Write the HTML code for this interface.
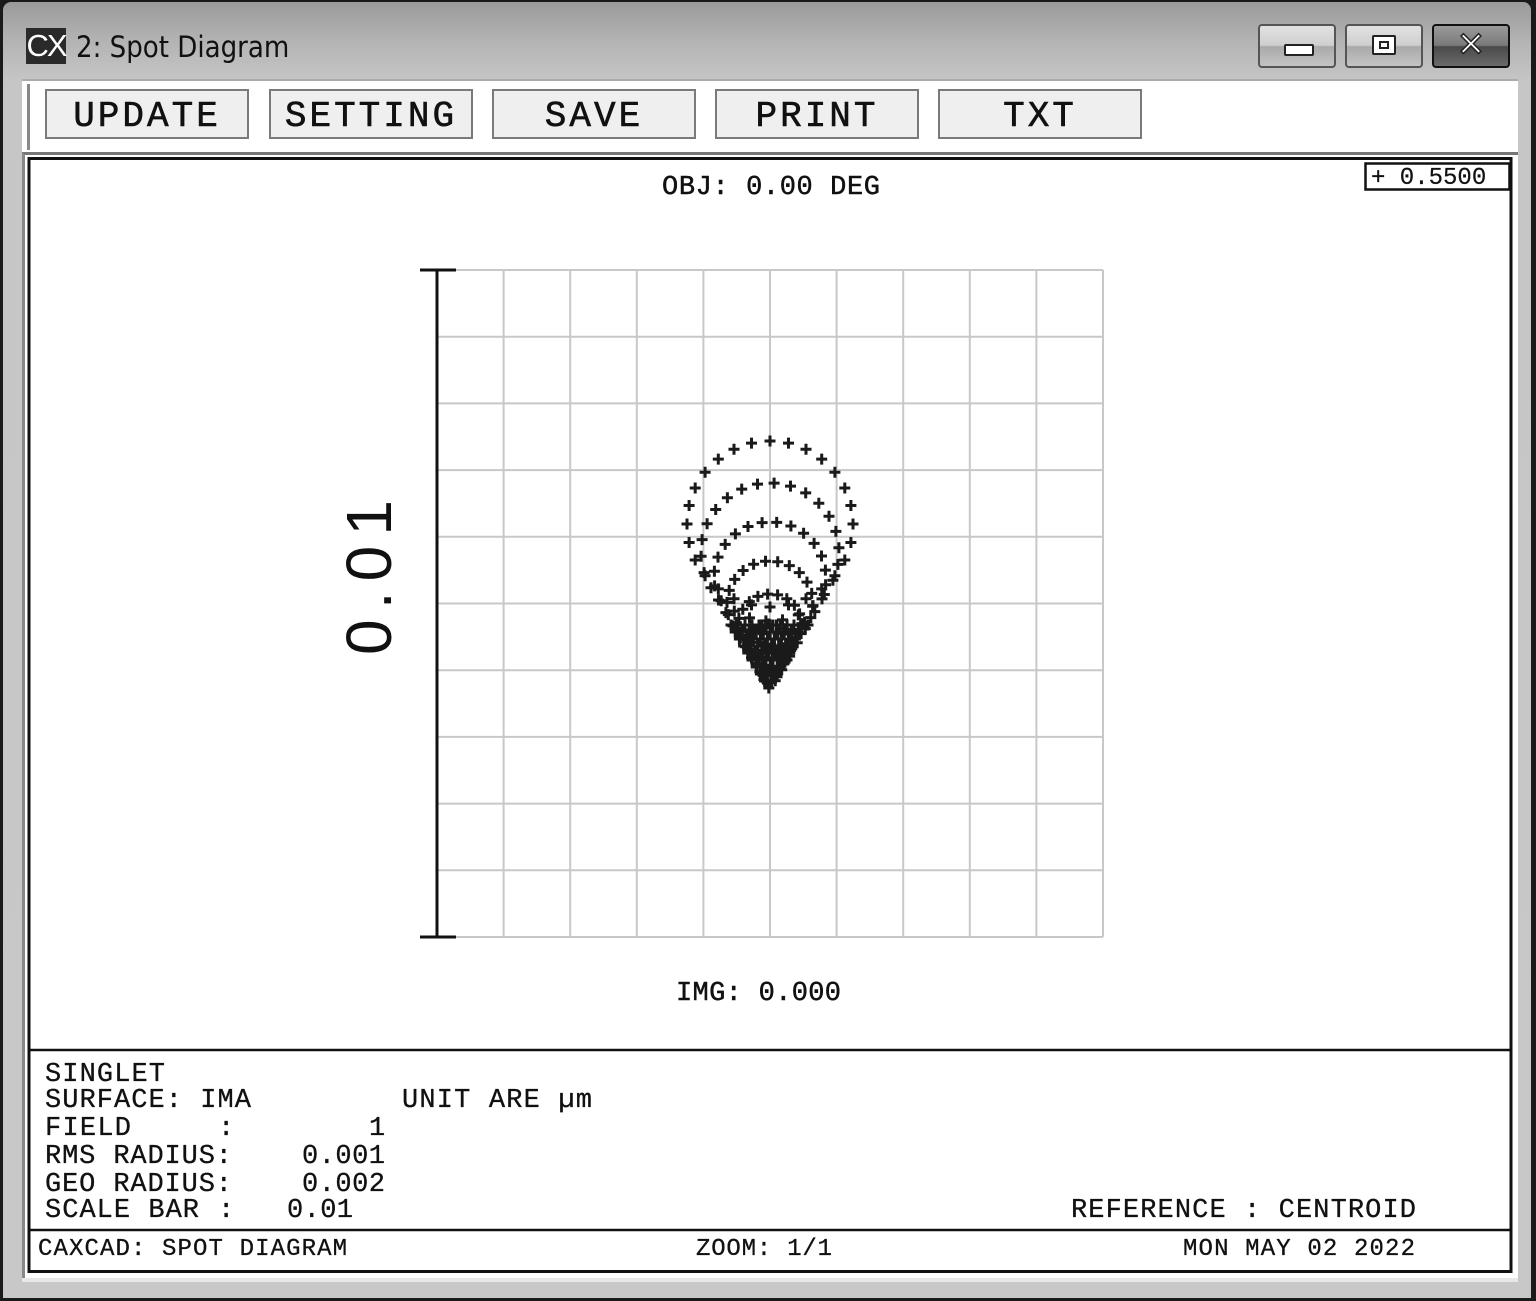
<!DOCTYPE html>
<html><head><meta charset="utf-8"><style>
html,body{margin:0;padding:0;width:1536px;height:1301px;overflow:hidden;background:#fff}
.a{position:absolute}
.btn{position:absolute;top:89px;height:50px;width:204px;background:#efefef;border:2px solid #7a7a7a;box-sizing:border-box;font-family:"Liberation Mono",monospace;font-size:36px;line-height:52px;text-align:center;letter-spacing:3px;color:#111;-webkit-text-stroke:0.6px #111}
.wb{position:absolute;top:24px;height:44px;width:78px;border:2px solid #555;border-radius:4px;box-sizing:border-box;background:linear-gradient(#e2e2e2 0%,#cfcfcf 48%,#a9a9a9 52%,#c4c4c4 100%)}
text{white-space:pre}
</style></head><body>
<div class="a" style="left:0;top:0;width:1536px;height:1301px;background:#1a1a1a"></div>
<div class="a" style="left:3px;top:2px;width:1528px;height:1296px;border-radius:8px 8px 0 0;background:linear-gradient(#9a9a9a 0px,#b4b4b4 40px,#c6c6c6 80px,#c8c8c8 100%)"></div>
<div class="a" style="left:26px;top:28px;width:40px;height:36px;background:#2a2a2a;color:#fff;font-family:'Liberation Sans',sans-serif;font-size:31px;line-height:36px;text-align:center;letter-spacing:-2px">CX</div>
<div class="a" style="left:76px;top:28px;font-family:'DejaVu Sans Condensed','Liberation Sans',sans-serif;font-size:29px;line-height:38px;color:#111">2: Spot Diagram</div>
<div class="wb" style="left:1258px"><div class="a" style="left:24px;top:18px;width:26px;height:8px;background:#fff;border:2px solid #222;border-radius:2px"></div></div>
<div class="wb" style="left:1345px"><div class="a" style="left:25px;top:9px;width:20px;height:16px;background:#fff;border:2px solid #222;border-radius:2px"><div class="a" style="left:5px;top:4px;width:6px;height:4px;border:2px solid #222"></div></div></div>
<div class="wb" style="left:1432px;border-color:#111;background:linear-gradient(#9a9a9a 0%,#7a7a7a 48%,#4a4a4a 52%,#6a6a6a 100%)"><div class="a" style="left:0;top:0;width:74px;height:40px;color:#fff;font-family:'DejaVu Sans',sans-serif;font-weight:bold;font-size:34px;line-height:38px;text-align:center;-webkit-text-stroke:1.5px #222">✕</div></div>
<div class="a" style="left:22px;top:79px;width:1496px;height:75px;background:#fff;border-top:2px solid #aaa"></div>
<div class="a" style="left:27px;top:84px;width:3px;height:66px;background:#888"></div>
<div class="btn" style="left:45px">UPDATE</div>
<div class="btn" style="left:269px">SETTING</div>
<div class="btn" style="left:492px">SAVE</div>
<div class="btn" style="left:715px">PRINT</div>
<div class="btn" style="left:938px">TXT</div>
<div class="a" style="left:22px;top:152px;width:1496px;height:1126px;background:#fff;border-top:3px solid #777;border-left:3px solid #888;box-sizing:border-box"></div>
<div class="a" style="left:22px;top:1278px;width:1496px;height:4px;background:#e8e8e8"></div>
<svg class="a" style="left:0;top:0" width="1536" height="1301" xmlns="http://www.w3.org/2000/svg">
<rect x="29" y="158.5" width="1482" height="1113" fill="none" stroke="#111" stroke-width="3"/>
<line x1="29" y1="1050" x2="1511" y2="1050" stroke="#111" stroke-width="2.5"/>
<line x1="29" y1="1230" x2="1511" y2="1230" stroke="#111" stroke-width="2.5"/>
<rect x="1365.5" y="163.5" width="144" height="26" fill="#fff" stroke="#111" stroke-width="2.5"/>
<g id="grid" stroke="#c8c8c8" stroke-width="2"></g>
<line x1="437" y1="270" x2="437" y2="937" stroke="#111" stroke-width="3"/>
<line x1="420" y1="270" x2="456" y2="270" stroke="#111" stroke-width="3"/>
<line x1="420" y1="937" x2="456" y2="937" stroke="#111" stroke-width="3"/>
<g id="spots" stroke="#1a1a1a" stroke-width="3"></g>
<g font-family="Liberation Mono, monospace" fill="#111" stroke="#111" stroke-width="0.5">
<text x="662" y="194" font-size="27" textLength="218">OBJ: 0.00 DEG</text>
<text x="676" y="1000" font-size="27" textLength="165">IMG: 0.000</text>
<text x="1371" y="184" font-size="24" stroke-width="0.2">+ 0.5500</text>
<text transform="translate(391,655) rotate(-90)" font-family="Liberation Sans, sans-serif" font-size="64" stroke-width="0" textLength="155" lengthAdjust="spacing">0.01</text>
</g>
<g font-family="Liberation Mono, monospace" fill="#111" font-size="27" stroke="#111" stroke-width="0.3">
<text x="45" y="1081" textLength="120">SINGLET</text>
<text x="45" y="1107" textLength="206">SURFACE: IMA</text>
<text x="402" y="1107" textLength="190">UNIT ARE µm</text>
<text x="45" y="1135" textLength="86">FIELD</text>
<text x="218" y="1135">:</text>
<text x="369" y="1135">1</text>
<text x="45" y="1163" textLength="187">RMS RADIUS:</text>
<text x="302" y="1163" textLength="83">0.001</text>
<text x="45" y="1191" textLength="187">GEO RADIUS:</text>
<text x="302" y="1191" textLength="83">0.002</text>
<text x="45" y="1217" textLength="154">SCALE BAR</text>
<text x="218" y="1217">:</text>
<text x="287" y="1217" textLength="66">0.01</text>
<text x="1071" y="1217" textLength="345">REFERENCE : CENTROID</text>
<text x="38" y="1255" font-size="24" textLength="309">CAXCAD: SPOT DIAGRAM</text>
<text x="696" y="1255" font-size="24" textLength="136">ZOOM: 1/1</text>
<text x="1183" y="1255" font-size="24" textLength="232">MON MAY 02 2022</text>
</g>
</svg>
<script>
var ns="http://www.w3.org/2000/svg";
var g=document.getElementById("grid"),d="";
for(var i=0;i<=10;i++){var x=437+i*66.6,y=270+i*66.7;d+="M"+x+" 270V937M437 "+y+"H1103";}
var p=document.createElementNS(ns,"path");p.setAttribute("d",d);g.appendChild(p);
var s=document.getElementById("spots"),sd="";
function cr(x,y){sd+="M"+(x-5.5).toFixed(1)+" "+y.toFixed(1)+"h11M"+x.toFixed(1)+" "+(y-5.5).toFixed(1)+"v11";}
var R=[83,69,56,43,32,22,14,7],N=[28,26,24,22,20,18,14,10];
for(var k=0;k<R.length;k++){var r=R[k],cy=690-2*r;for(var j=0;j<N[k];j++){var t=2*Math.PI*j/N[k]+0.06*k;cr(770+r*Math.sin(t),cy-r*Math.cos(t));}}
for(var k=0;k<10;k++){var yy=625+k*7,w=(690-yy)*0.6;for(var x=770-w;x<=770+w;x+=7){cr(x,yy);}}
var q=document.createElementNS(ns,"path");q.setAttribute("d",sd);s.appendChild(q);
</script>
</body></html>
